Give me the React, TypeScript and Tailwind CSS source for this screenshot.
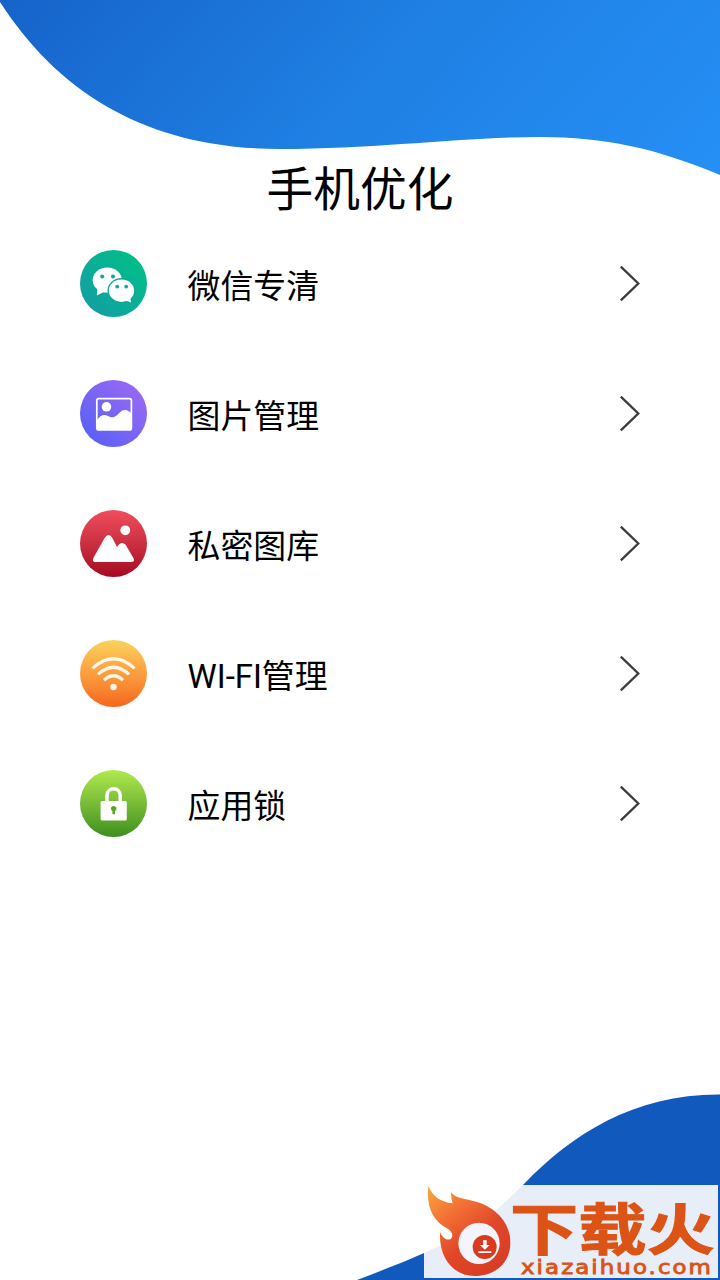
import type { ReactNode } from "react";

type MenuItem = {
  label: string;
  icon: ReactNode;
};

const WechatIcon = () => (
  <svg viewBox="0 0 67 67" className="size-full">
    <ellipse cx="27.3" cy="30.2" rx="14.6" ry="12.6" fill="#fff" />
    <path d="M17.500 38l-.7 7.500 8-4z" fill="#fff" />
    <ellipse cx="41.500" cy="40.500" rx="14" ry="12.400" fill="#0baa93" />
    <ellipse cx="41.500" cy="40.700" rx="12.700" ry="11.200" fill="#fff" />
    <path d="M44 50l7.200 2.600-1.200-6z" fill="#fff" />
    <circle cx="22.200" cy="26.500" r="2" fill="#12a79a" />
    <circle cx="33" cy="26.500" r="2" fill="#12a79a" />
    <circle cx="37.200" cy="36.600" r="1.900" fill="#12a79a" />
    <circle cx="46.200" cy="36.600" r="1.900" fill="#12a79a" />
  </svg>
);

const PictureIcon = () => (
  <svg viewBox="0 0 67 67" className="size-full">
    <rect x="16.800" y="18.600" width="34.600" height="31.300" rx="2" fill="none" stroke="#fff" strokeWidth="1.700" />
    <circle cx="26.500" cy="26.800" r="4.800" fill="#fff" />
    <path
      d="M17 40C20 35.500 24 33.500 28 36C31 37.600 33 38 36 36C40 33 41 30 45 30C48 30 49 31.500 51.400 33V48.500Q51.400 50 50 50H18.500Q17 50 17 48.500z"
      fill="#fff"
    />
  </svg>
);

const PrivateIcon = () => (
  <svg viewBox="0 0 67 67" className="size-full">
    <circle cx="45.300" cy="20.300" r="4.900" fill="#fff" />
    <path
      d="M15 52Q12 51.500 13.200 48.200L24.500 28.200Q28.500 22 32.500 28.200L37 37Q41 30.500 45.500 34.500L53.700 48.500Q55 52 51 52z"
      fill="#fff"
    />
  </svg>
);

const WifiIcon = () => (
  <svg viewBox="0 0 67 67" className="size-full" fill="none" stroke="#fff8ea" strokeWidth="3.200">
    <path d="M12.500 28.400Q33.500 9 54.500 28.400" />
    <path d="M18 34.400Q33.500 20 49 34.400" />
    <path d="M24 40.200Q33.500 31.200 43 40.200" />
    <circle cx="33.500" cy="47" r="3.200" fill="#fff8ea" stroke="none" />
  </svg>
);

const LockIcon = () => (
  <svg viewBox="0 0 67 67" className="size-full">
    <path d="M27 33V25.500C27 16.500 40.200 16.500 40.200 25.500V33" fill="none" stroke="#fff" strokeWidth="3.500" />
    <rect x="20.600" y="31" width="26.200" height="19.500" rx="1.500" fill="#fff" />
    <circle cx="33.700" cy="38.600" r="2.700" fill="#5ca52b" />
    <path d="M32.400 39h2.600v5.200h-2.600z" fill="#5ca52b" />
  </svg>
);

const items: MenuItem[] = [
  {
    label: "微信专清",
    icon: (
      <div className="size-[67px] rounded-full bg-linear-to-tr from-[#159aa6] to-[#02c382]">
        <WechatIcon />
      </div>
    ),
  },
  {
    label: "图片管理",
    icon: (
      <div className="size-[67px] rounded-full bg-linear-to-tr from-[#4e5ef6] to-[#a069f3]">
        <PictureIcon />
      </div>
    ),
  },
  {
    label: "私密图库",
    icon: (
      <div className="size-[67px] rounded-full bg-linear-to-b from-[#f04d5e] to-[#a60622]">
        <PrivateIcon />
      </div>
    ),
  },
  {
    label: "WI-FI管理",
    icon: (
      <div className="size-[67px] rounded-full bg-linear-to-b from-[#f9d25c] to-[#f6651d]">
        <WifiIcon />
      </div>
    ),
  },
  {
    label: "应用锁",
    icon: (
      <div className="size-[67px] rounded-full bg-linear-to-b from-[#b1ea4f] to-[#3d8f1f]">
        <LockIcon />
      </div>
    ),
  },
];

function Row({ label, icon }: MenuItem) {
  return (
    <button className="flex h-[67px] w-full items-center text-left">
      {icon}
      <span className="ml-[40.500px] flex-1 pt-1.5 text-[32.900px] leading-[40px] text-black">{label}</span>
      <svg viewBox="0 0 20 36" className="h-9 w-5" fill="none" stroke="#3c3c3c" strokeWidth="2.300">
        <path d="M.800 .600L18.300 17.500L.800 34.400" />
      </svg>
    </button>
  );
}

function Logo() {
  return (
    <svg viewBox="12 15 882 279" className="absolute right-0.5 bottom-0.5 h-[93px] w-[294px] bg-white/90">
      <defs>
        <linearGradient id="flame" x1="0" y1="0" x2="0.700" y2="1">
          <stop offset="0" stopColor="#fba336" />
          <stop offset="0.350" stopColor="#f2682c" />
          <stop offset="0.650" stopColor="#e0401f" />
          <stop offset="1" stopColor="#d9351c" />
        </linearGradient>
      </defs>
      <path
        d="M25 18C38 50 62 66 98 70Q92 52 94 37C104 52 122 55 148 60C218 74 271 120 271 188C271 246 228 288 165 288C98 288 56 232 60 157C68 174 80 183 92 177C103 166 94 151 80 144C40 124 18 82 25 18z"
        fill="url(#flame)"
        opacity="0.960"
      />
      <circle cx="177" cy="190" r="62" fill="#f3f5fa" />
      <circle cx="194" cy="201" r="36" fill="#da3b20" />
      <path d="M189 181h11v14h9l-14.500 14-14.500-14h9zM175 214h39v5h-39z" fill="#fff" />
      <g fill="#dc5316" stroke="#dc5316">
        <text x="270" y="209" fontSize="166" fontWeight="700" strokeWidth="3" textLength="614" lengthAdjust="spacingAndGlyphs">
          下载火
        </text>
        <text
          x="303"
          y="281"
          fontSize="56"
          strokeWidth="2.500"
          letterSpacing="5"
          textLength="576"
          lengthAdjust="spacingAndGlyphs"
          className="font-[family-name:'DejaVu_Sans',sans-serif]"
        >
          xiazaihuo.com
        </text>
      </g>
    </svg>
  );
}

export default function App() {
  return (
    <main className="flex h-[1280px] w-full flex-col overflow-hidden bg-white font-[family-name:'Roboto','Noto_Sans_CJK_SC',sans-serif]">
      <svg viewBox="0 0 720 176" className="h-[176px] w-full shrink-0" preserveAspectRatio="none">
        <defs>
          <linearGradient id="sky" gradientUnits="userSpaceOnUse" x1="50" y1="-60" x2="530" y2="370">
            <stop offset="0" stopColor="#1663ca" />
            <stop offset="0.500" stopColor="#1f7fe2" />
            <stop offset="1" stopColor="#258ff5" />
          </linearGradient>
        </defs>
        <path
          d="M0 0V2C60 95 150 149 280 149C380 149 460 137 540 137C605 137 655 148 720 175V0z"
          fill="url(#sky)"
        />
      </svg>

      <h1 className="-mt-4 text-center text-[46.700px] leading-[60px] text-black">手机优化</h1>

      <nav className="mt-[30px] flex flex-col gap-[63px] px-20">
        {items.map((item) => (
          <Row key={item.label} {...item} />
        ))}
      </nav>

      <footer className="relative mt-auto">
        <svg viewBox="0 0 720 190" className="block h-[190px] w-full" preserveAspectRatio="none">
          <path d="M357 190C430 162 475 145 524 94C572 44 635 4 720 4.500V190z" fill="#1159bd" />
        </svg>
        <Logo />
      </footer>
    </main>
  );
}
